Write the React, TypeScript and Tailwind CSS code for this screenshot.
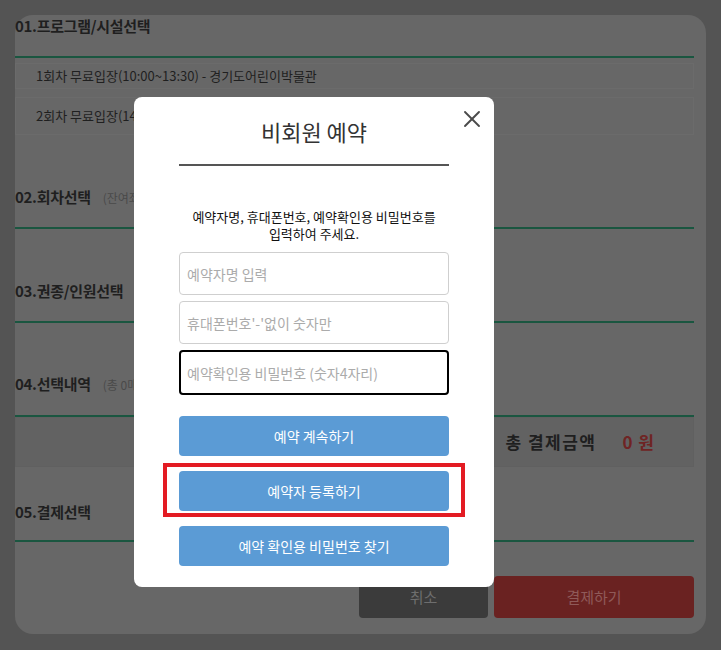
import { X } from "lucide-react";

const font = { fontFamily: '"Noto Sans CJK KR", "Noto Sans", sans-serif' };

function SectionHead({
  title,
  sub,
  className,
}: {
  title: string;
  sub?: string;
  className: string;
}) {
  return (
    <div className={`border-b-2 border-[#1a5640] ${className}`}>
      <div className="flex items-baseline gap-3 leading-[22px]">
        <span className="text-[15px] font-bold tracking-[-0.3px] text-[#1f1f1f]">
          {title}
        </span>
        {sub && <span className="text-[12px] text-[#4a4a4a]">{sub}</span>}
      </div>
    </div>
  );
}

function ModalInput({
  placeholder,
  focused,
}: {
  placeholder: string;
  focused?: boolean;
}) {
  return (
    <input
      type="text"
      autoFocus={focused}
      placeholder={placeholder}
      className={
        focused
          ? "h-[45px] w-full rounded-[4px] border-2 border-black px-[6px] text-[14px] text-[#333] outline-none placeholder:text-[#ababab]"
          : "h-[43px] w-full rounded-[4px] border border-[#cfcfcf] px-[7px] text-[14px] text-[#333] outline-none placeholder:text-[#ababab]"
      }
    />
  );
}

function BlueButton({ label }: { label: string }) {
  return (
    <button className="flex h-[40px] w-full items-center justify-center rounded-[4px] bg-[#5b9bd5] text-[14px] text-white">
      {label}
    </button>
  );
}

export default function App() {
  return (
    <div
      className="relative h-[650px] w-[721px] overflow-hidden bg-[#545454] p-[15px] pb-[16px]"
      style={font}
    >
      <div className="h-[619px] rounded-[18px] bg-[#676767] pr-3">
        <div className="flex flex-col">
          {/* 01 */}
          <div className="h-[43px] border-b-2 border-[#1a5640]">
            <div className="text-[15px] font-bold leading-[22px] tracking-[-0.3px] text-[#1f1f1f]">
              01.프로그램/시설선택
            </div>
          </div>
          <div className="mt-[5px] flex h-[26px] items-center border border-[#6b6b6b] pl-[20px] text-[13px] text-[#1f1f1f]">
            1회차 무료입장(10:00~13:30) - 경기도어린이박물관
          </div>
          <div className="mt-[8px] flex h-[38px] items-center border border-[#6b6b6b] pl-[20px] text-[13px] text-[#1f1f1f]">
            2회차 무료입장(14:00~17:30) - 경기도어린이박물관
          </div>

          <SectionHead
            title="02.회차선택"
            sub="(잔여좌석 : 0석)"
            className="pt-[51px] pb-[18px]"
          />
          <SectionHead title="03.권종/인원선택" className="pt-[51px] pb-[19px]" />
          <SectionHead
            title="04.선택내역"
            sub="(총 0매)"
            className="pt-[50px] pb-[19px]"
          />

          <div className="flex h-[50px] items-center justify-end gap-[26px] border border-[#606060] bg-[#626262] pr-[38px]">
            <span className="text-[17px] font-bold tracking-[1.5px] text-[#1f1f1f]">
              총 결제금액
            </span>
            <span className="text-[17px] font-bold tracking-[1px] text-[#6f2424]">
              0 원
            </span>
          </div>

          <SectionHead title="05.결제선택" className="pt-[34px] pb-[17px]" />

          <div className="mt-[34px] flex justify-end gap-[6px]">
            <button className="flex h-[42px] w-[129px] items-center justify-center rounded-[4px] bg-[#3b3b3b] text-[15px] text-[#6e6e6e]">
              취소
            </button>
            <button className="flex h-[42px] w-[200px] items-center justify-center rounded-[4px] bg-[#6a2221] text-[15px] text-[#8f5a59]">
              결제하기
            </button>
          </div>
        </div>
      </div>

      {/* modal */}
      <div className="absolute left-[134px] top-[97px] w-[360px] rounded-[8px] bg-white pb-[21px] pt-[19px]">
        <button className="absolute right-[8px] top-[8px] text-[#4a4a4a]">
          <X size={28} strokeWidth={1.6} />
        </button>
        <div className="text-center text-[22px] leading-[30px] text-[#333]">
          비회원 예약
        </div>
        <div className="mx-auto mt-[18px] h-[2px] w-[270px] bg-[#555]" />
        <div className="mt-[42px] text-center text-[13px] leading-[17px] text-[#111]">
          예약자명, 휴대폰번호, 예약확인용 비밀번호를
          <br />
          입력하여 주세요.
        </div>
        <div className="mx-auto mt-[10px] flex w-[270px] flex-col gap-[6px]">
          <ModalInput placeholder="예약자명 입력" />
          <ModalInput placeholder="휴대폰번호'-'없이 숫자만" />
          <ModalInput placeholder="예약확인용 비밀번호 (숫자4자리)" focused />
        </div>
        <div className="mx-auto mt-[21px] flex w-[270px] flex-col">
          <BlueButton label="예약 계속하기" />
          <div className="-mx-[16px] mt-[7px] border-4 border-[#e31b23] px-[12px] pb-[2px] pt-[4px]">
            <BlueButton label="예약자 등록하기" />
          </div>
          <div className="mt-[9px]">
            <BlueButton label="예약 확인용 비밀번호 찾기" />
          </div>
        </div>
      </div>
    </div>
  );
}
